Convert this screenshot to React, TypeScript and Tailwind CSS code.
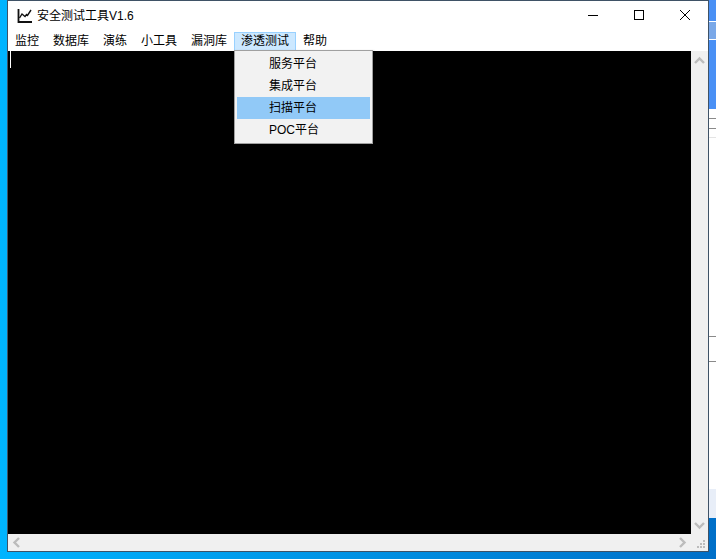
const menus = ['监控', '数据库', '演练', '小工具', '漏洞库', '渗透测试', '帮助'];
const items = ['服务平台', '集成平台', '扫描平台', 'POC平台'];
const font = "font-['Liberation_Sans','Noto_Sans_CJK_SC',sans-serif]";

// bits of the window behind, only a few pixels of it show on the right
const strip = [
  'h-[21px] bg-[#4a90f5]',
  'h-[1px] bg-white',
  'h-[17px] bg-[#7aa8e8]',
  'h-[1px] bg-white',
  'h-[69px] bg-[#4a90f5]',
  'h-[9px] bg-white',
  'h-[1px] bg-[#8a8a8a]',
  'h-[9px] bg-white',
  'h-[1px] bg-[#8a8a8a]',
  'h-[8px] bg-white',
  'h-[1px] bg-[#e4e4e4]',
  'h-[198px] bg-white',
  'h-[1px] bg-[#8a8a8a]',
  'h-[24px] bg-white',
  'h-[1px] bg-[#8a8a8a]',
  'h-[127px] bg-white',
  'h-[29px] bg-[#e8eef8]',
];

const Chevron = ({ d }: { d: string }) => {
  return (
    <svg width="11" height="11" viewBox="0 0 11 11" fill="none" stroke="#bcbcbc" strokeWidth="2.4">
      <path d={d} />
    </svg>
  );
};

const App = () => {
  return (
    <div className={`${font} w-[716px] h-[559px] flex bg-gradient-to-r from-[#00b4ff] to-[#006fc8] overflow-hidden`}>
      <div className="w-[7px] shrink-0" />
      <div className="w-[702px] h-[552px] shrink-0 flex flex-col bg-white border border-[#3f5266]">
        <div className="h-[30px] shrink-0 flex items-center pl-[9px] pb-[1px]">
          <svg width="16" height="16" viewBox="0 0 16 16" fill="none" stroke="#111">
            <path d="M1.5 1v13H15" strokeWidth="1.8" />
            <path d="M2.5 10l2.5-4 3 2.5 1.5-2 1 1L14 2" strokeWidth="1.4" />
          </svg>
          <span className="ml-[4px] text-[12px] text-black">安全测试工具V1.6</span>
          <div className="ml-auto flex items-center">
            <svg width="46" height="29" viewBox="0 0 46 29" stroke="#000" fill="none">
              <path d="M18 14.5h10" />
            </svg>
            <svg width="46" height="29" viewBox="0 0 46 29" stroke="#000" fill="none">
              <rect x="18.5" y="9.5" width="9" height="9" />
            </svg>
            <svg width="46" height="29" viewBox="0 0 46 29" stroke="#000" fill="none">
              <path d="M18 9l10 10M28 9L18 19" />
            </svg>
          </div>
        </div>
        <div className="h-[20px] shrink-0 flex items-center relative">
          {menus.map((m) => (
            <div
              key={m}
              className={`h-[19px] px-[6px] flex items-center text-[12px] text-black border ${
                m === '渗透测试' ? 'bg-[#cce8ff] border-[#99d1ff]' : 'border-transparent'
              }`}
            >
              {m}
            </div>
          ))}
          <div className="absolute left-[226px] top-[19px] w-[139px] h-[94px] z-10 p-[2px] bg-[#f2f2f2] border border-[#a0a0a0] shadow-[1px_1px_2px_rgba(0,0,0,0.3)]">
            {items.map((it) => (
              <div
                key={it}
                className={`h-[22px] pl-[32px] flex items-center text-[12px] text-black ${
                  it === '扫描平台' ? 'bg-[#91c9f7]' : ''
                }`}
              >
                {it}
              </div>
            ))}
          </div>
        </div>
        <div className="flex-1 flex flex-col min-h-0 bg-[#f0f0f0]">
          <div className="flex-1 flex min-h-0">
            <div className="flex-1 bg-black pl-[2px]">
              <div className="w-px h-[17px] bg-white" />
            </div>
            <div className="w-[17px] flex flex-col items-center justify-between pt-[4px] pb-[3px]">
              <Chevron d="M1 8l4.5-4.5L10 8" />
              <Chevron d="M1 3l4.5 4.5L10 3" />
            </div>
          </div>
          <div className="h-[17px] shrink-0 flex items-center">
            <div className="flex-1 flex items-center justify-between px-[3px]">
              <Chevron d="M8 1L3.5 5.5 8 10" />
              <Chevron d="M3 1l4.5 4.5L3 10" />
            </div>
            <div className="w-[17px] h-[17px] shrink-0">
              <svg width="17" height="17" viewBox="0 0 17 17" fill="#bcbcbc">
                <rect x="12" y="6" width="2" height="2" />
                <rect x="9" y="9" width="2" height="2" />
                <rect x="12" y="9" width="2" height="2" />
                <rect x="6" y="12" width="2" height="2" />
                <rect x="9" y="12" width="2" height="2" />
                <rect x="12" y="12" width="2" height="2" />
              </svg>
            </div>
          </div>
        </div>
      </div>
      <div className="w-[7px] shrink-0 flex flex-col">
        {strip.map((s, i) => (
          <div key={i} className={s} />
        ))}
      </div>
    </div>
  );
};

export default App;
